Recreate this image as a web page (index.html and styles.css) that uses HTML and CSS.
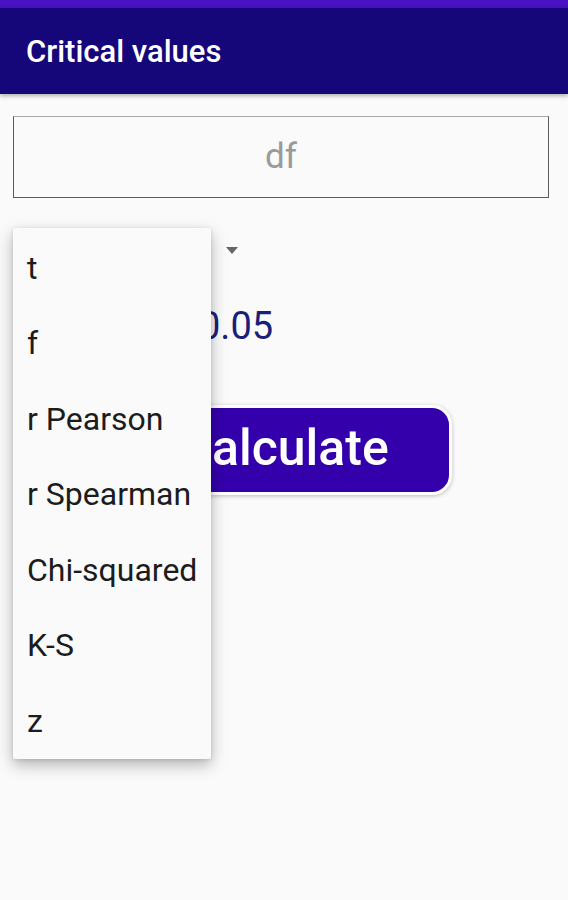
FILE: index.html
```html
<!DOCTYPE html>
<html>
<head>
<meta charset="utf-8">
<link rel="stylesheet" href="styles.css">
</head>
<body>
<div class="status"></div>
<header class="appbar">Critical values</header>
<main class="content">
  <div class="input">df</div>
  <div class="spinner-row">
    <div class="spinner"><span class="arrow"></span></div>
  </div>
  <div class="alpha-row"><span class="alpha">0.05</span></div>
  <div class="btn-row"><button class="calc">Calculate</button></div>
  <ul class="menu">
    <li>t</li>
    <li>f</li>
    <li>r Pearson</li>
    <li>r Spearman</li>
    <li>Chi-squared</li>
    <li>K-S</li>
    <li>z</li>
  </ul>
</main>
</body>
</html>
```
FILE: styles.css
```css
* { box-sizing: border-box; }
html, body { margin: 0; padding: 0; }
body {
  width: 568px;
  height: 900px;
  background: #fafafa;
  font-family: Roboto, "Noto Sans", sans-serif;
  overflow: hidden;
}
.status { height: 8px; background: #4a10c3; }
.appbar {
  height: 86px;
  background: #15077a;
  color: #fff;
  font-weight: 500;
  font-size: 31px;
  display: flex;
  align-items: center;
  padding-left: 26px;
  padding-top: 1px;
  box-shadow: 0 2px 4px rgba(0,0,0,0.3);
  position: relative;
  z-index: 1;
}
.content {
  position: relative;
  padding: 22px 19px 0 13px;
}
.input {
  height: 82px;
  border: 1.5px solid #5a5a5a;
  border-top-color: #a8a8a8;
  display: flex;
  align-items: center;
  justify-content: center;
  font-size: 35px;
  color: #9a9a9a;
  padding-bottom: 2px;
}
.spinner-row { height: 60px; margin-top: 23px; display: flex; align-items: center; }
.spinner { width: 225px; display: flex; justify-content: flex-end; padding-bottom: 2px; }
.arrow {
  width: 0; height: 0;
  border-left: 6.5px solid transparent;
  border-right: 6.5px solid transparent;
  border-top: 7px solid #666;
}
.alpha-row { height: 74px; margin-top: 8px; display: flex; align-items: center; padding-left: 186px; }
.alpha { font-size: 38px; color: #1a1f7a; }
.btn-row { display: flex; justify-content: center; margin-top: 42px; padding-left: 6px; }
.calc {
  width: 336px;
  height: 90px;
  background: #3400ab;
  border: 3px solid #fff;
  border-radius: 20px;
  color: #fff;
  font-family: Roboto, sans-serif;
  font-weight: 500;
  font-size: 50px;
  box-shadow: 0 1px 4px rgba(0,0,0,0.25);
  padding: 0 0 4px 0;
}
.menu {
  position: absolute;
  left: 13px;
  top: 134px;
  width: 198px;
  margin: 0;
  padding: 2px 0 0 0;
  list-style: none;
  background: #fafafa;
  border-radius: 2px;
  box-shadow: 0 6px 16px rgba(0,0,0,0.28), 0 1px 4px rgba(0,0,0,0.12);
  z-index: 2;
}
.menu li {
  height: 75.5px;
  display: flex;
  align-items: center;
  padding-left: 14px;
  font-size: 32px;
  color: #1c1c1c;
}
```
